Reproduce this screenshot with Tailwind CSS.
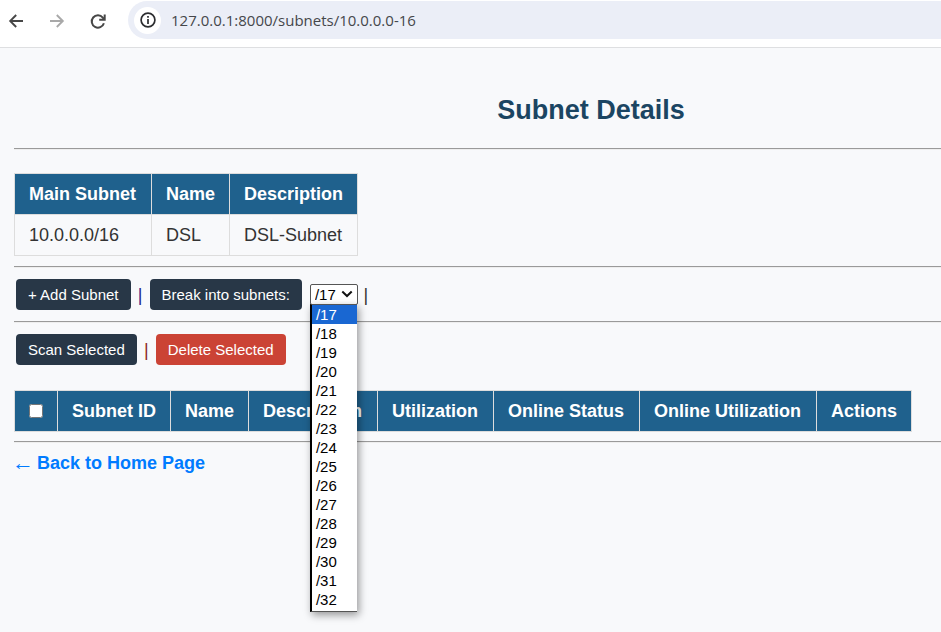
<!DOCTYPE html>
<html lang="en">
<head>
<meta charset="utf-8">
<title>Subnet Details</title>
<script src="https://cdn.jsdelivr.net/npm/@tailwindcss/browser@4"></script>
</head>
<body class="min-h-screen overflow-hidden bg-[#f8f9fb] font-['Liberation_Sans',Arial,sans-serif] text-lg/6 text-[#333]">
<header class="flex h-12 items-start border-b border-[#dedfe1] bg-white">
  <nav class="flex h-[41px] items-center gap-5 pl-[6px]" aria-label="Browser">
    <button type="button" aria-label="Back" class="size-5"><svg class="size-5" viewBox="0 0 20 20" fill="none" stroke="#474747" stroke-width="1.9"><path d="M17 10H4.5M10.2 4L4.2 10l6 6"/></svg></button>
    <button type="button" aria-label="Forward" class="size-5"><svg class="size-5" viewBox="0 0 20 20" fill="none" stroke="#a9a9a9" stroke-width="1.9"><path d="M4 10H16.5M10.8 4l6 6-6 6"/></svg></button>
    <button type="button" aria-label="Reload" class="size-5"><svg class="size-5" viewBox="0 0 20 20" fill="none" stroke="#474747" stroke-width="2"><path d="M17.9 12.2A6.2 6.2 0 1 1 16.8 6.6L18.4 8.4M18.7 3.5V8.8H13.2"/></svg></button>
  </nav>
  <div class="ml-[22px] mt-px flex h-[38px] grow items-center gap-[10px] rounded-l-full bg-[#ebeef7] pl-[6px]">
    <button type="button" aria-label="Site information" class="flex size-[27px] items-center justify-center rounded-full bg-white"><svg class="size-4" viewBox="0 0 16 16" fill="none" stroke="#2b2c2f" stroke-width="1.7"><circle cx="8" cy="8" r="6.9"/><path d="M8 7v5M8 4v1.8"/></svg></button>
    <input type="text" aria-label="Address" value="127.0.0.1:8000/subnets/10.0.0.0-16" class="grow bg-transparent font-['Open_Sans',sans-serif] text-[15px]/5 text-[#45474b] outline-none">
  </div>
</header>
<main class="pl-[14px]">
  <h1 class="pt-[46px] pl-[227px] text-center text-[27px]/8 font-bold text-[#1b4562]">Subnet Details</h1>
  <hr class="mt-[22px] h-[2px] border-t border-b border-t-[#9a9a9a] border-b-[#eeeeee]">
  <table class="mt-[23px] border-collapse [&_td]:border [&_td]:border-[#ddd] [&_td]:px-[14px] [&_td]:py-2 [&_th]:border [&_th]:border-[#ddd] [&_th]:bg-[#1f618d] [&_th]:px-[14px] [&_th]:py-2 [&_th]:text-left [&_th]:text-white">
    <thead><tr><th class="min-w-[137px]">Main Subnet</th><th class="min-w-[78px]">Name</th><th class="min-w-[128px]">Description</th></tr></thead>
    <tbody><tr><td>10.0.0.0/16</td><td>DSL</td><td>DSL-Subnet</td></tr></tbody>
  </table>
  <hr class="mt-[10px] h-[2px] border-t border-b border-t-[#9a9a9a] border-b-[#eeeeee]">
  <div class="mt-[11px] flex items-center pl-[2px] text-[15px]/[19px]">
    <button type="button" class="rounded bg-[#283747] px-3 py-[6px] text-white">+ Add Subnet</button>
    <span class="w-[19px] text-center text-lg/5 text-[#24248c]">|</span>
    <button type="button" class="rounded bg-[#283747] px-3 py-[6px] text-white">Break into subnets:</button>
    <div class="relative ml-2">
      <select aria-label="Subnet prefix length" class="block h-[21px] w-12 appearance-none rounded-[2px] border border-[#555] bg-white pl-1 text-[15px]/[19px] text-black">
        <option>/17</option><option>/18</option><option>/19</option><option>/20</option><option>/21</option><option>/22</option><option>/23</option><option>/24</option><option>/25</option><option>/26</option><option>/27</option><option>/28</option><option>/29</option><option>/30</option><option>/31</option><option>/32</option>
      </select>
      <svg class="pointer-events-none absolute top-[6px] right-[5px] h-2 w-3" viewBox="0 0 12 8" fill="none" stroke="#111" stroke-width="2"><path d="M1.3 1.5L6 6l4.700-4.500"/></svg>
      <ul role="listbox" aria-label="Prefix lengths" class="absolute top-5 left-0 z-10 w-[47px] border-t border-b border-l-2 border-t-[#555] border-b-[#555] border-l-black bg-white pb-0.5 text-[15px]/[19px] text-black shadow-[2px_3px_8px_rgba(0,0,0,0.4)] [&>li]:pl-1">
        <li role="option" aria-selected="true" class="bg-[#1967d2] text-white">/17</li>
        <li role="option">/18</li><li role="option">/19</li><li role="option">/20</li><li role="option">/21</li><li role="option">/22</li><li role="option">/23</li><li role="option">/24</li><li role="option">/25</li><li role="option">/26</li><li role="option">/27</li><li role="option">/28</li><li role="option">/29</li><li role="option">/30</li><li role="option">/31</li><li role="option">/32</li>
      </ul>
    </div>
    <span class="w-4 text-center text-lg/5">|</span>
  </div>
  <hr class="mt-[11px] h-[2px] border-t border-b border-t-[#9a9a9a] border-b-[#eeeeee]">
  <div class="mt-[11px] flex items-center pl-[2px] text-[15px]/[19px]">
    <button type="button" class="rounded bg-[#283747] px-3 py-[6px] text-white">Scan Selected</button>
    <span class="w-[19px] text-center text-lg/5 text-[#8c2424]">|</span>
    <button type="button" class="rounded bg-[#cb4335] px-3 py-[6px] text-white">Delete Selected</button>
  </div>
  <table class="mt-[25px] border-collapse [&_th]:border [&_th]:border-[#ddd] [&_th]:bg-[#1f618d] [&_th]:px-[14px] [&_th]:py-2 [&_th]:text-left [&_th]:whitespace-nowrap [&_th]:text-white">
    <thead><tr>
      <th><input type="checkbox" aria-label="Select all subnets" class="block size-[14px]"></th>
      <th class="min-w-[113px]">Subnet ID</th><th class="min-w-[78px]">Name</th><th class="min-w-[129px]">Description</th><th class="min-w-[116px]">Utilization</th><th class="min-w-[146px]">Online Status</th><th class="min-w-[177px]">Online Utilization</th><th class="min-w-[95px]">Actions</th>
    </tr></thead>
  </table>
  <hr class="mt-[9px] h-[2px] border-t border-b border-t-[#9a9a9a] border-b-[#eeeeee]">
  <a href="/" class="mt-2 inline-flex items-center gap-[5px] font-bold text-[#007bff]"><span class="flex w-[18px] justify-center font-['Liberation_Serif',serif] text-[22px]/6 font-normal">←</span> Back to Home Page</a>
</main>
</body>
</html>
